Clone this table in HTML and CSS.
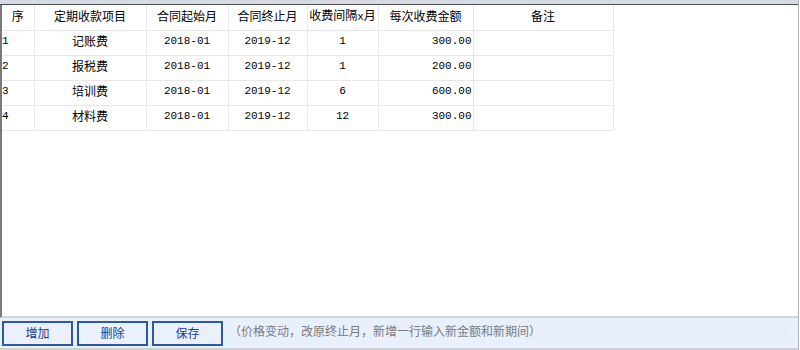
FILE: index.html
```html
<!DOCTYPE html>
<html lang="zh-CN">
<head>
<meta charset="utf-8">
<title>定期收款项目</title>
<link rel="stylesheet" href="styles.css">
</head>
<body>
<div class="frame">
  <div class="topbar"></div>
  <div class="panel">
    <table class="grid">
      <colgroup>
        <col class="c1"><col class="c2"><col class="c3"><col class="c4"><col class="c5"><col class="c6"><col class="c7">
      </colgroup>
      <thead>
        <tr><th>序</th><th>定期收款项目</th><th>合同起始月</th><th>合同终止月</th><th>收费间隔<span class="x">x</span>月</th><th>每次收费金额</th><th>备注</th></tr>
      </thead>
      <tbody>
        <tr><td class="l num">1</td><td>记账费</td><td class="num">2018-01</td><td class="num">2019-12</td><td class="num">1</td><td class="r num">300.00</td><td></td></tr>
        <tr><td class="l num">2</td><td>报税费</td><td class="num">2018-01</td><td class="num">2019-12</td><td class="num">1</td><td class="r num">200.00</td><td></td></tr>
        <tr><td class="l num">3</td><td>培训费</td><td class="num">2018-01</td><td class="num">2019-12</td><td class="num">6</td><td class="r num">600.00</td><td></td></tr>
        <tr><td class="l num">4</td><td>材料费</td><td class="num">2018-01</td><td class="num">2019-12</td><td class="num">12</td><td class="r num">300.00</td><td></td></tr>
      </tbody>
    </table>
  </div>
  <div class="toolbar">
    <button class="btn">增加</button>
    <button class="btn">删除</button>
    <button class="btn">保存</button>
    <span class="hint">（价格变动，改原终止月，新增一行输入新金额和新期间）</span>
  </div>
</div>
</body>
</html>
```

FILE: styles.css
```css
html, body {
  margin: 0;
  padding: 0;
  background: #ffffff;
}
body {
  width: 800px;
  height: 350px;
  overflow: hidden;
  font-family: "Noto Sans CJK SC", "Liberation Sans", sans-serif;
  font-size: 12px;
  color: #000;
}
.frame {
  width: 799px;
  height: 350px;
  display: flex;
  flex-direction: column;
  border-right: 1px solid #b4b4b4;
  box-sizing: border-box;
}
.topbar {
  height: 4px;
  background: #d6dae2;
  border-bottom: 1px solid #505050;
  flex: none;
}
.panel {
  flex: 1;
  background: #fff;
  border-left: 2px solid #7a7a7a;
  border-bottom: 2px solid #d4d4d4;
}
.grid {
  border-collapse: collapse;
  table-layout: fixed;
  width: 611px;
}
.c1 { width: 32px; }
.c2 { width: 112px; }
.c3 { width: 82px; }
.c4 { width: 79px; }
.c5 { width: 71px; }
.c6 { width: 95px; }
.c7 { width: 140px; }
.grid tr {
  height: 25px;
}
.grid th, .grid td {
  height: 25px;
  padding: 0 0 3px 0;
  border-right: 1px solid #e8e8e8;
  border-bottom: 1px solid #e8e8e8;
  text-align: center;
  font-weight: normal;
  line-height: 16px;
  white-space: nowrap;
  overflow: hidden;
  box-sizing: border-box;
  vertical-align: middle;
}
.num {
  font-family: "Liberation Mono", "DejaVu Sans Mono", monospace;
  font-size: 11px;
}
.x {
  font-family: "Liberation Mono", monospace;
  font-size: 11px;
}
.grid td.l {
  text-align: left;
  padding-left: 0;
}
.grid td.r {
  text-align: right;
  padding-right: 1px;
}
.toolbar {
  flex: none;
  height: 32px;
  box-sizing: border-box;
  background: #e9f0fd;
  border-bottom: 2px solid #cdd0d6;
  display: flex;
  align-items: center;
  gap: 4px;
  padding: 0 0 0 2px;
}
.btn {
  width: 71px;
  height: 25px;
  margin: 0;
  padding: 0;
  border: 2px solid #2c5a9c;
  background: #eaf1fd;
  color: #1b3d8f;
  font-family: "Noto Sans CJK SC", sans-serif;
  font-size: 12px;
  line-height: 18px;
}
.hint {
  margin-left: 2px;
  color: #7a7a7a;
  font-size: 12px;
  padding-bottom: 6px;
}
```
